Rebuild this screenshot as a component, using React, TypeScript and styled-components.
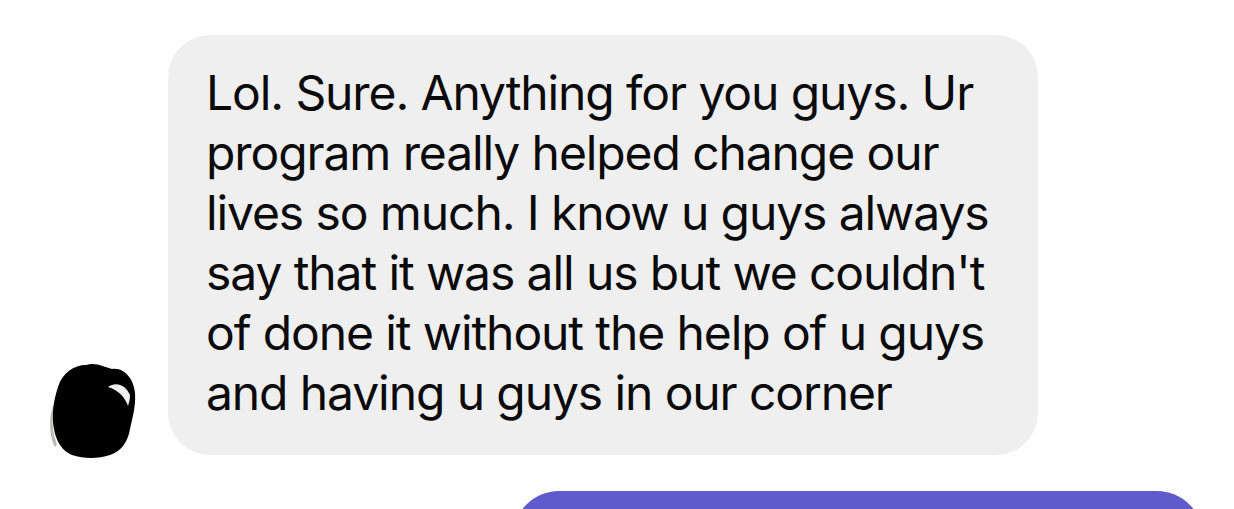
import React from "react";
import styled, { createGlobalStyle } from "styled-components";

const Global = createGlobalStyle`
  html, body { margin: 0; padding: 0; background: #ffffff; }
  body { font-family: Inter, "Noto Sans", "Liberation Sans", sans-serif; overflow: hidden; }
`;

const Page = styled.div`
  width: 1234px;
  height: 509px;
  overflow: hidden;
  display: flex;
  flex-direction: column;
  gap: 36px;
  padding-top: 35px;
  box-sizing: border-box;
`;

const IncomingRow = styled.div`
  display: flex;
  align-items: flex-end;
  padding-left: 48px;
  gap: 32px;
`;

const Avatar = styled.div`
  width: 88px;
  height: 100px;
  margin-bottom: -4px;
  flex: none;
`;

const Bubble = styled.div`
  width: 870px;
  box-sizing: border-box;
  padding: 28px 20px 32px 38px;
  background: #efefef;
  border-radius: 42px;
  color: #0a0a0a;
  font-size: 48px;
  line-height: 60px;
  letter-spacing: -1.1px;
`;

const Line = styled.span`
  display: block;
  white-space: nowrap;
`;

const OutgoingRow = styled.div`
  display: flex;
  justify-content: flex-end;
  padding-right: 31px;
`;

const OutBubble = styled.div`
  width: 690px;
  height: 120px;
  background: #5f5bcd;
  border-radius: 46px;
`;

const lines = [
  "Lol. Sure. Anything for you guys. Ur",
  "program really helped change our",
  "lives so much. I know u guys always",
  "say that it was all us but we couldn't",
  "of done it without the help of u guys",
  "and having u guys in our corner",
];

export default function App() {
  return (
    <>
      <Global />
      <Page>
        <IncomingRow>
          <Avatar>
            <svg width="88" height="100" viewBox="0 0 88 100">
              <path d="M6 44 C3 60 5 74 8 82 C10 88 7 90 5 84 C1 72 1 56 6 44 Z" fill="#b9bdb4" />
              <path
                d="M10 28 C14 14 26 6 38 6 C48 3 56 8 64 10 C76 8 86 20 87 34 C88 48 84 60 82 70 C80 82 74 92 62 96 C50 100 36 100 24 96 C14 92 8 82 6 70 C3 56 6 40 10 28 Z"
                fill="#000"
              />
              <path d="M60 28 C68 22 78 26 82 36 C82 40 81 44 80 47 C77 38 70 31 60 28 Z" fill="#f0f0f0" />
            </svg>
          </Avatar>
          <Bubble>
            {lines.map((l) => (
              <Line key={l}>{l}</Line>
            ))}
          </Bubble>
        </IncomingRow>
        <OutgoingRow>
          <OutBubble />
        </OutgoingRow>
      </Page>
    </>
  );
}
